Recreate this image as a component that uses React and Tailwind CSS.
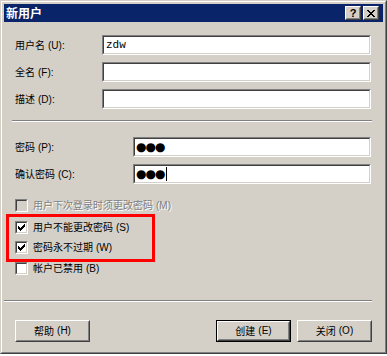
const cjk = { fontFamily: '"Noto Sans CJK SC", "Liberation Sans", sans-serif' };

function Sunken({ className = "", children }) {
  return (
    <div className={`border border-t-[#808080] border-l-[#808080] border-b-white border-r-white ${className}`}>
      <div className="h-full border border-t-[#404040] border-l-[#404040] border-b-[#d4d0c8] border-r-[#d4d0c8] bg-white flex items-center">
        {children}
      </div>
    </div>
  );
}

function Field({ label, mn, labelW, children }) {
  return (
    <div className="flex items-center h-[20px]">
      <div className={`${labelW} shrink-0 text-[10px] text-black leading-none`} style={cjk}>
        {label}
        <span className="ml-[3px] font-['Liberation_Sans'] text-[10px]">({mn}):</span>
      </div>
      <Sunken className="flex-1 h-[20px]">{children}</Sunken>
    </div>
  );
}

function Check({ checked, disabled }) {
  return (
    <div className="w-[13px] h-[13px] shrink-0 border border-t-[#808080] border-l-[#808080] border-b-white border-r-white">
      <div className={`w-full h-full border border-t-[#404040] border-l-[#404040] border-b-[#d4d0c8] border-r-[#d4d0c8] ${disabled ? "bg-[#d4d0c8]" : "bg-white"} flex items-center justify-center`}>
        {checked && (
          <svg width="7" height="7" viewBox="0 0 7 7" shapeRendering="crispEdges">
            <path d="M0 2h1v3h-1zM1 3h1v3h-1zM2 4h1v3h-1zM3 3h1v3h-1zM4 2h1v3h-1zM5 1h1v3h-1zM6 0h1v3h-1z" fill="#000" />
          </svg>
        )}
      </div>
    </div>
  );
}

function CheckRow({ label, mn, checked, disabled, h = "h-[20px]" }) {
  return (
    <div className={`flex items-center gap-[5px] ${h}`}>
      <Check checked={checked} disabled={disabled} />
      <span
        className={`text-[10px] leading-none ${disabled ? "text-[#808080] [text-shadow:1px_1px_0_#fff]" : "text-black"}`}
        style={cjk}
      >
        {label}
        <span className="ml-[3px] font-['Liberation_Sans']">({mn})</span>
      </span>
    </div>
  );
}

function Button({ label, mn, isDefault }) {
  const inner = (
    <div className="w-full h-full border border-t-white border-l-white border-b-[#404040] border-r-[#404040]">
      <div className="w-full h-full border border-transparent border-b-[#808080] border-r-[#808080] flex items-center justify-center text-[10px] text-black leading-none" style={cjk}>
        {label}
        <span className="ml-[3px] font-['Liberation_Sans']">({mn})</span>
      </div>
    </div>
  );
  return (
    <div className={`w-[75px] h-[22px] ${isDefault ? "border border-black" : ""}`}>{inner}</div>
  );
}

function TitleButton({ children }) {
  return (
    <div className="w-[16px] h-[14px] border border-t-white border-l-white border-b-[#404040] border-r-[#404040] bg-[#d4d0c8]">
      <div className="w-full h-full border border-transparent border-b-[#808080] border-r-[#808080] flex items-center justify-center">
        {children}
      </div>
    </div>
  );
}

export default function App() {
  return (
    <div className="w-[387px] h-[356px] bg-white">
      <div className="w-[387px] h-[354px] border border-t-[#d4d0c8] border-l-[#d4d0c8] border-b-[#404040] border-r-[#404040]">
        <div className="w-full h-full border border-t-white border-l-white border-b-[#808080] border-r-[#808080] bg-[#d4d0c8] p-[2px] flex flex-col">
          {/* title bar */}
          <div className="h-[18px] bg-[#0a246a] flex items-center justify-between pl-[2px] pr-[4px]">
            <span className="text-white font-bold text-[12px] leading-none" style={cjk}>新用户</span>
            <div className="flex gap-[2px]">
              <TitleButton>
                <span className="font-['Liberation_Sans'] font-bold text-[11px] leading-none text-black">?</span>
              </TitleButton>
              <TitleButton>
                <svg width="8" height="7" viewBox="0 0 8 7" shapeRendering="crispEdges">
                  <path d="M0 0h2v1h-2zM6 0h2v1h-2zM1 1h2v1h-2zM5 1h2v1h-2zM2 2h4v1h-4zM3 3h2v1h-2zM2 4h4v1h-4zM1 5h2v1h-2zM5 5h2v1h-2zM0 6h2v1h-2zM6 6h2v1h-2z" fill="#000" />
                </svg>
              </TitleButton>
            </div>
          </div>

          {/* body */}
          <div className="flex flex-col pl-[11px] pr-[12px]">
            <div className="mt-[13px] flex flex-col gap-[7px]">
              <Field label="用户名" mn="U" labelW="w-[87px]">
                <span className="pl-[2px] text-[11px] font-['Liberation_Mono'] text-black leading-none">zdw</span>
              </Field>
              <Field label="全名" mn="F" labelW="w-[87px]" />
              <Field label="描述" mn="D" labelW="w-[87px]" />
            </div>

            <div className="mt-[11px] ml-[-3px] mr-[-1px] border-t border-t-[#808080] border-b border-b-white" />

            <div className="mt-[15px] flex flex-col gap-[7px]">
              <Field label="密码" mn="P" labelW="w-[118px]">
                <span className="pl-[1px] text-[12px] tracking-[-1px] text-black leading-none font-['DejaVu_Sans']">●●●</span>
              </Field>
              <Field label="确认密码" mn="C" labelW="w-[118px]">
                <span className="pl-[1px] text-[12px] tracking-[-1px] text-black leading-none font-['DejaVu_Sans']">●●●</span>
                <span className="ml-[2px] w-px h-[14px] bg-black" />
              </Field>
            </div>

            <div className="mt-[13px]">
              <CheckRow label="用户下次登录时须更改密码" mn="M" disabled h="h-[16px]" />
            </div>

            <div className="mt-[1px] ml-[-9px] w-[149px] h-[48px] border-[3px] border-[#ff0000] pl-[6px] flex flex-col">
              <CheckRow label="用户不能更改密码" mn="S" checked />
              <CheckRow label="密码永不过期" mn="W" checked />
            </div>

            <CheckRow label="帐户已禁用" mn="B" h="h-[13px]" />

            <div className="mt-[25px] ml-[-11px] mr-[-1px] border-t border-t-[#808080] border-b border-b-white" />

            <div className="mt-[18px] mr-[-1px] flex items-center">
              <Button label="帮助" mn="H" />
              <div className="flex-1" />
              <Button label="创建" mn="E" isDefault />
              <div className="w-[6px]" />
              <Button label="关闭" mn="O" />
            </div>
          </div>
        </div>
      </div>
    </div>
  );
}
